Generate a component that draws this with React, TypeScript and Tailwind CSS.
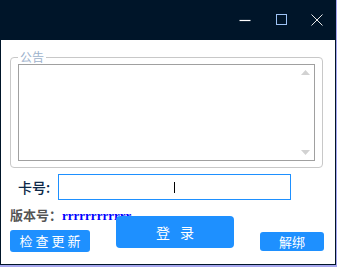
const cjk = '"Noto Sans CJK SC", "Noto Sans", sans-serif';

function TitleBar() {
  return (
    <div className="flex h-[39px] items-center justify-end bg-[#001529] pb-[2px]">
      <button className="flex h-[30px] w-[36px] items-center justify-center">
        <svg width="12" height="12" viewBox="0 0 12 12">
          <line x1="0.5" y1="6.5" x2="11.5" y2="6.5" stroke="#ffffff" strokeWidth="1.2" />
        </svg>
      </button>
      <button className="flex h-[30px] w-[36px] items-center justify-center">
        <svg width="11" height="11" viewBox="0 0 11 11">
          <rect x="0.5" y="0.5" width="10" height="10" fill="none" stroke="#9ec3f5" strokeWidth="1" />
        </svg>
      </button>
      <button className="flex h-[30px] w-[36px] items-center justify-center">
        <svg width="12" height="12" viewBox="0 0 12 12">
          <path d="M0.5 0.5 L11.5 11.5 M11.5 0.5 L0.5 11.5" stroke="#e6e6e6" strokeWidth="1" />
        </svg>
      </button>
    </div>
  );
}

function Notice() {
  return (
    <fieldset className="ml-[9px] mr-[12px] mt-[10px] rounded-[4px] border border-[#c8c8c8] px-[7px] pb-[6px]">
      <legend className="px-[2px] text-[12px] leading-[14px] text-[#9db2cc]" style={{ fontFamily: cjk }}>
        公告
      </legend>
      <div className="flex h-[97px] border border-[#a0a0a0] bg-white">
        <div className="flex-1" />
        <div className="flex w-[16px] flex-col items-center justify-between pb-[5px] pr-[1px] pt-[5px]">
          <svg width="9" height="5" viewBox="0 0 9 5">
            <path d="M0 5 L4.5 0 L9 5 Z" fill="#d2d2d2" />
          </svg>
          <svg width="9" height="5" viewBox="0 0 9 5">
            <path d="M0 0 L9 0 L4.5 5 Z" fill="#d2d2d2" />
          </svg>
        </div>
      </div>
    </fieldset>
  );
}

export default function App() {
  return (
    <div className="h-[267px] w-[337px] bg-[#a6a6ee]" style={{ fontFamily: cjk }}>
      <div className="flex h-[265px] w-[336px] flex-col border border-[#001529] bg-white">
        <TitleBar />
        <Notice />

        <div className="ml-[17px] mt-[6px] flex items-center">
          <span className="w-[40px] text-[14px] font-medium leading-[26px] text-[#0d2848]">卡号:</span>
          <div className="flex h-[26px] w-[233px] items-center justify-center border border-[#1e90ff]">
            <span className="h-[11px] w-[1px] bg-black" />
          </div>
        </div>

        <div className="mt-[5px] flex items-start">
          <div className="ml-[9px] flex w-[80px] flex-col">
            <div className="h-[16px] whitespace-nowrap leading-[16px]">
              <span className="text-[13px] font-bold text-[#555555]">版本号：</span>
              <span
                className="text-[13px] font-bold text-[#0000ff]"
                style={{ fontFamily: '"Liberation Serif", serif' }}
              >
                rrrrrrrrrrrr
              </span>
            </div>
            <button className="mt-[9px] h-[22px] w-[80px] rounded-[3px] bg-[#1e90ff] pl-[3px] text-[13px] leading-[22px] tracking-[3px] text-white">
              检查更新
            </button>
          </div>

          <button className="relative ml-[26px] mt-[11px] flex h-[32px] w-[118px] items-center justify-center gap-[10px] rounded-[4px] bg-[#1e90ff] text-[14px] text-white">
            <span>登</span>
            <span>录</span>
          </button>

          <button className="ml-auto mr-[11px] mt-[27px] h-[19px] w-[64px] rounded-[3px] bg-[#1e90ff] text-[13px] leading-[19px] text-white">
            解绑
          </button>
        </div>
      </div>
    </div>
  );
}
